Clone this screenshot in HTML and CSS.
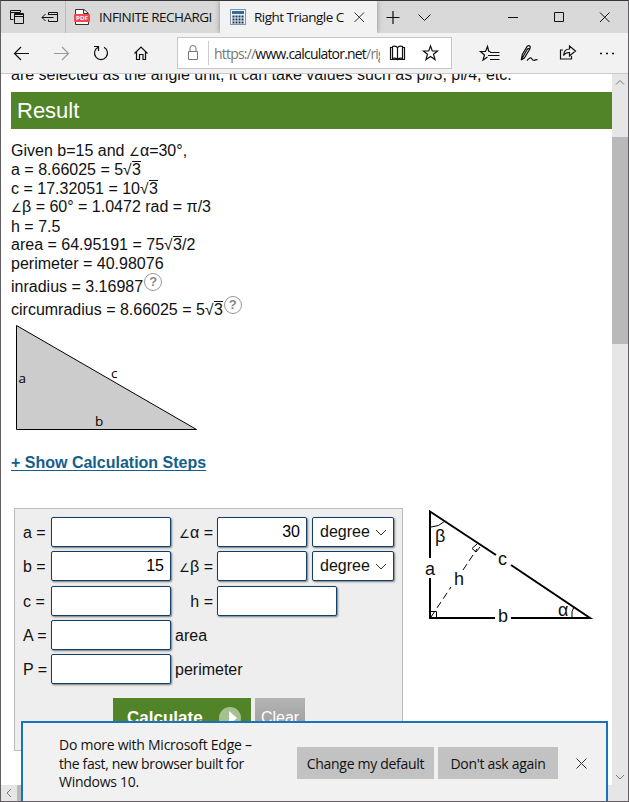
FILE: index.html
```html
<!DOCTYPE html>
<html lang="en">
<head>
<meta charset="utf-8">
<title>Right Triangle Calculator</title>
<link rel="stylesheet" href="styles.css">
</head>
<body>
<div class="window">
  <header class="titlebar">
    <div class="tab-tools">
      <svg width="66" height="32" fill="none" stroke="#111">
        <path d="M12.500 18.500H9.500V9.500H19.500V11M9.500 11.500H19.500"/>
        <path d="M13.500 12.500H22.500V22.500H13.500ZM13.500 15.500H22.500M13.500 13.500H22.500"/>
        <path d="M47.500 14V11.500H56.500V20.500H47.500V18.500M47.500 13.500H56.500M41 16.500H52.500M44.500 13L41 16.500L44.500 20"/>
      </svg>
    </div>
    <div class="tab">
      <svg class="pdf" width="16" height="18"><path d="M1.500 1.500H10L14.500 5.500V16.500H1.500Z" fill="#fff" stroke="#333"/><path d="M9.500 1.500V5.500H14" fill="none" stroke="#333"/><rect y="6" width="16" height="8" rx="1" fill="#f04b4b"/><text x="2" y="12.300" class="pdf-text" textLength="12" lengthAdjust="spacingAndGlyphs">PDF</text></svg>
      <span class="tab-one">INFINITE RECHARGI</span>
    </div>
    <div class="tab active">
      <svg class="calc" width="16" height="17"><rect x=".5" y=".5" width="15" height="15" fill="#edf3f8" stroke="#8097a9"/><path d="M2 3.500H14" stroke="#346c9e" stroke-width="3"/><path d="M2.500 7.500H14M2.500 10.500H14M2.500 13.500H14" stroke="#163450" stroke-width="2" stroke-dasharray="2 1"/></svg>
      <span class="tab-two">Right Triangle C</span>
      <svg class="tab-close" width="11" height="11" fill="none" stroke="#333"><path d="M.5.5L10 10M10 .5L.5 10"/></svg>
    </div>
    <svg class="window-tools" width="251" height="32" fill="none" stroke="#111">
      <path d="M9.500 16.500H22.500M16 10V23" stroke-width="1.200"/>
      <path d="M41.500 13.500L47.500 19.500L53.500 13.500"/>
      <path d="M131 16.500H141M177.500 11.500H186.500V20.500H177.500ZM223 11.500L232.500 21M232.500 11.500L223 21"/>
    </svg>
  </header>
  <nav class="toolbar">
    <svg width="176" height="40" fill="none" stroke="#111" stroke-width="1.200">
      <path d="M28 20.500H14M20 14L13.500 20.500L20 27"/>
      <path d="M53 20.500H67M61 14L67.500 20.500L61 27" stroke="#999"/>
      <path d="M97 14.300A6.500 6.500 0 1 0 103 14.300M93 13.500H97.500V18"/>
      <path d="M133.500 20.500L140 14L146.500 20.500M135.500 19V26.500H138.500V21.500H142V26.500H144.500V19"/>
    </svg>
    <div class="address">
      <svg width="35" height="30" fill="none" stroke="#777"><path d="M10.500 13.500H19.500V21.500H10.500ZM12 13V10Q12 7.500 15 7.500T18 10V13"/><path d="M30.500 3V27" stroke="#ccc"/></svg>
      <span class="url">https://<b>www.calculator.net</b>/rig</span>
      <svg width="71" height="30" fill="none" stroke="#111">
        <path d="M17.500 9.500V21.500Q15 19.500 12.500 20.500V8.500Q15 7.500 17.500 9.500Q20 7.500 22.500 8.500V20.500Q20 19.500 17.500 21.500M12.500 9.500H10.500V21.500H24.500V9.500H22.500" stroke-width="1.200"/>
        <path d="M50.500 8L52.300 13H57.500L53.500 16.200L55 21.500L50.500 18.400L46 21.500L47.500 16.200L43.500 13H48.700Z" stroke-width="1.200"/>
      </svg>
    </div>
    <svg class="toolbar-right" width="171" height="40" fill="none" stroke="#111" stroke-width="1.200">
      <path d="M34.500 18.500H32.800L31.500 13.500L29.500 18.500H24.500L28.500 22L27 27L31.500 24M34 19.500H43.500M32 22.500H43.500M34 26.500H43.500"/>
      <path d="M65.200 27L66.300 21.500L71.300 13.200Q73.200 11.800 74.300 13.800L73.800 16L68.300 25L65.200 27L70.500 17.500Q72 14.500 74 16M71 27.500Q74.500 23.500 75.500 25.500T78.500 27.500Q80 26 81.500 27"/>
      <path d="M107 17.500H104.500V26.500H115.500V23.500M107.500 23Q108 16.500 113.500 16.500V13.500L119.500 18.500L113.500 23.500V20Q109.500 19.800 107.500 23Z" transform="translate(0 -.5)"/>
      <path d="M144 20.500H146M150 20.500H152M156 20.500H158" stroke-width="1.700"/>
    </svg>
  </nav>
  <div class="viewport">
    <main class="page">
      <p class="intro">are selected as the angle unit, it can take values such as pi/3, pi/4, etc.</p>
      <h2>Result</h2>
      <div class="results">
        <div>Given b=15 and <span class="angle">∠</span>α=30°,</div>
        <div>a = 8.66025 = 5<span class="root">√</span><span class="radicand">3</span></div>
        <div>c = 17.32051 = 10<span class="root">√</span><span class="radicand">3</span></div>
        <div><span class="angle">∠</span>β = 60° = 1.0472 rad = π/3</div>
        <div class="height-line">h = 7.5</div>
        <div>area = 64.95191 = 75<span class="root">√</span><span class="radicand">3</span>/2</div>
        <div>perimeter = 40.98076</div>
        <div class="help-line"><span>inradius = 3.16987</span><span class="help">?</span></div>
        <div class="help-line"><span>circumradius = 8.66025 = 5<span class="root">√</span><span class="radicand">3</span></span><span class="help">?</span></div>
      </div>
      <svg class="result-triangle" width="186" height="109"><path d="M5.500 1.500V105.500H185.500Z" fill="#ccc" stroke="#000"/><text x="7.500" y="59">a</text><text x="100" y="54">c</text><text x="84" y="102">b</text></svg>
      <a class="steps">+ Show Calculation Steps</a>
      <div class="lower">
        <form class="calculator">
          <div class="fields">
            <label>a =</label><input><label class="right"><span class="angle">∠</span>α =</label><input value="30"><div class="select">degree <svg width="12" height="7"><path d="M1 1L6 6L11 1" fill="none" stroke="#333"/></svg></div>
            <label>b =</label><input value="15"><label class="right"><span class="angle">∠</span>β =</label><input><div class="select">degree <svg width="12" height="7"><path d="M1 1L6 6L11 1" fill="none" stroke="#333"/></svg></div>
            <label>c =</label><input><label class="right">h =</label><input class="wide">
            <label>A =</label><input><label class="unit">area</label>
            <label>P =</label><input><label class="unit">perimeter</label>
          </div>
          <div class="actions"><button class="calculate" type="button">Calculate<svg width="22" height="22"><circle cx="11" cy="11" r="11" fill="#a4c18f"/><path d="M10 4L18 11L10 18Z" fill="#fff"/></svg></button><button class="clear" type="button">Clear</button></div>
        </form>
        <svg class="diagram" width="170" height="120" fill="none" stroke="#000">
          <path d="M5 49V2.500L71 46M86 56L165 109H86M70 109H5V69" stroke-width="2"/>
          <path d="M6 108L26 78M38 61L52 40" stroke-dasharray="7 4"/>
          <path d="M6 18Q14 18 20 12M147 108Q146 102 149 98M6 102.500H11.500V108M52 35L47 39.500L51 43L55 38"/>
          <g class="diagram-labels"><text x="10" y="33">β</text><text x="0" y="66">a</text><text x="73" y="56">c</text><text x="29" y="76">h</text><text x="73" y="113">b</text><text x="133" y="107">α</text></g>
        </svg>
      </div>
    </main>
    <div class="scrollbar"><svg width="16" height="20" fill="none" stroke="#777"><path d="M4 10.500L8 6.500L12 10.500"/></svg><div class="thumb"></div><svg class="down" width="16" height="20" fill="none" stroke="#777"><path d="M4 10L8 14L12 10"/></svg></div>
  </div>
  <div class="bottom-scroll"><svg width="16" height="15" fill="none" stroke="#777"><path d="M10 4L6 8L10 12"/></svg><div class="bottom-thumb"></div></div>
  <aside class="notice">
    <p><span class="n1">Do more with Microsoft Edge –</span><br><span class="n2">the fast, new browser built for</span><br><span class="n3">Windows 10.</span></p>
    <button class="default-button" type="button">Change my default</button>
    <button class="dismiss-button" type="button">Don't ask again</button>
    <svg width="11" height="11" fill="none" stroke="#333"><path d="M.5.5L10.500 10.500M10.500 .5L.5 10.500"/></svg>
  </aside>
</div>
</body>
</html>
```
FILE: styles.css
```css
* { box-sizing: border-box; }
body { margin: 0; font: 16px "Liberation Sans", sans-serif; color: #111; }
p, h2 { margin: 0; }
svg { display: block; flex: none; }
button { border: 0; padding: 0; border-radius: 0; }
.window { position: relative; width: 629px; height: 802px; overflow: hidden; background: #fff; border: 1px solid #625d60; border-top-color: #39343a; display: flex; flex-direction: column; }
.titlebar { height: 32px; flex: none; background: #d9d9d9; display: flex; font: 13.500px "Open Sans", sans-serif; }
.tab-tools { width: 65px; border-right: 1px solid #bbb; overflow: hidden; }
.tab { width: 154px; flex: none; display: flex; align-items: center; padding-left: 8px; white-space: nowrap; }
.tab svg + span { margin-left: 9px; }
.tab-one { letter-spacing: -.53px; }
.tab.active { width: 157px; background: #f2f2f2; padding-left: 10px; box-shadow: 0 0 5px #888; clip-path: inset(0 -6px); }
.tab .tab-two { letter-spacing: -.53px; width: 94px; margin-left: 8px; }
.tab-close { margin-left: 6px; }
.pdf-text { font: bold 6px "Open Sans", sans-serif; fill: #fff; }
.toolbar { height: 41px; flex: none; background: #f2f2f2; border-bottom: 1px solid #c9c9c9; display: flex; }
.toolbar-right { margin-left: 4px; }
.address { width: 275px; flex: none; height: 32px; margin-top: 4px; border: 1px solid #c8c8c8; background: #fff; display: flex; align-items: center; }
.url { width: 167px; overflow: hidden; white-space: nowrap; padding-left: 1px; color: #777; font: 14px "Open Sans", sans-serif; letter-spacing: -.8px; }
.url b { color: #111; font-weight: 400; }
.viewport { height: 711px; flex: none; display: flex; overflow: hidden; }
.page { width: 611px; padding-left: 10px; overflow: hidden; }
.intro { height: 18px; line-height: 18px; margin-top: -8px; margin-bottom: 8px; white-space: nowrap; }
h2 { height: 37px; padding-left: 6px; background: #518428; color: #fff; font-weight: 400; font-size: 22px; line-height: 37px; }
.results { margin-top: 12px; height: 183px; }
.results > div { height: 18.800px; line-height: 19px; white-space: nowrap; }
.results > .height-line { line-height: 21px; }
.results > .help-line { height: 23.500px; line-height: 28px; display: flex; }
.angle { font-size: 12px; }
.root { display: inline-block; width: 9px; font-size: 15.500px; line-height: 15px; }
.radicand { display: inline-block; height: 15px; line-height: 15px; border-top: 1px solid #111; }
.help { width: 18px; height: 18px; margin: 0 0 0 1px; border: 1.500px solid #999; border-radius: 50%; color: #888; font: bold 13px/15px "Liberation Sans", sans-serif; text-align: center; }
.result-triangle text { font: 13.500px "Open Sans", sans-serif; }
.steps { display: block; width: max-content; height: 18px; line-height: 17px; margin-top: 21px; color: #155e8b; font-weight: 700; text-decoration: underline; text-underline-offset: 2px; text-decoration-thickness: 1px; text-decoration-skip-ink: none; }
.lower { display: flex; margin-top: 36px; }
.calculator { width: 389px; height: 243px; margin-left: 3px; border: 1px solid #bbb; background: #eee; padding: 8px 8px 0; }
.fields { display: grid; grid-template-columns: 28px 120px 46px 90px 82px; column-gap: 0; grid-auto-rows: 34.350px; }
.fields label { line-height: 31px; white-space: nowrap; }
.fields .right { text-align: right; padding-right: 4px; }
.fields .unit { grid-column: 3 / 6; padding-left: 4px; }
input, .select { width: 100%; height: 30px; border: 1px solid #123f69; border-radius: 2px; background: #fff; box-shadow: 1px 1px 2px #777; font: 16px "Liberation Sans", sans-serif; }
input { padding: 0 6px; text-align: right; }
.wide { width: 120px; grid-column: 4 / 6; }
.select { width: 82px; margin-left: 5px; padding: 0 6px 0 7px; display: flex; align-items: center; justify-content: space-between; }
.actions { display: flex; gap: 4px; margin: 9px 0 0 90px; }
.calculate { width: 138px; height: 38px; padding: 2px 10px 0 14px; display: flex; align-items: center; justify-content: space-between; background: #518428; color: #fff; font: bold 17px "Liberation Sans", sans-serif; }
.clear { width: 50px; height: 38px; padding-top: 3px; background: linear-gradient(#b4b4b4, #999); color: #fff; font: 16px "Liberation Sans", sans-serif; }
.diagram { margin: 1px 0 0 22px; }
.diagram-labels { fill: #111; stroke: none; font-size: 18px; }
.scrollbar { width: 16px; background: #e6e6e6; display: flex; flex-direction: column; }
.thumb { height: 207px; margin-top: 43px; background: #b9b9b9; }
.down { margin-top: auto; }
.bottom-scroll { height: 17px; background: #e6e6e6; display: flex; }
.bottom-thumb { width: 500px; background: #b9b9b9; }
.notice { position: absolute; left: 20px; top: 720px; width: 587px; height: 80px; padding-left: 36px; border: 2px solid #1a72bb; border-bottom: 0; background: #f1f1f1; display: flex; font: 14px "Open Sans", sans-serif; }
.notice p { width: 238px; padding-top: 13px; line-height: 18.500px; white-space: nowrap; }
.n1, .n3 { letter-spacing: -.26px; }
.n2 { letter-spacing: -.38px; }
.notice button { height: 32px; margin-top: 24px; background: #c2c2c2; color: #111; font: 14px "Open Sans", sans-serif; letter-spacing: -.3px; }
.default-button { width: 137px; }
.dismiss-button { width: 120px; margin-left: 4px; }
.notice > svg { margin: 35px 0 0 18px; }
```
